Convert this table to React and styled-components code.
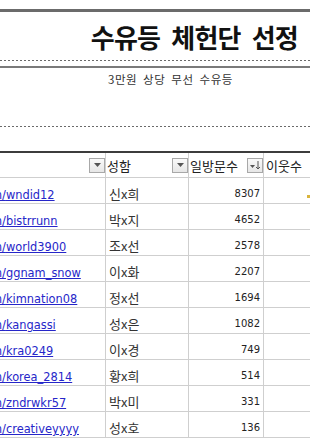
import React from "react"
import styled, { createGlobalStyle } from "styled-components"

//  global
const GlobalStyle = createGlobalStyle`
  body {
    margin: 0;
    background: #fff;
    overflow: hidden;
  }
`

//  styled components
const Sheet = styled.div`
  width: 310px;
  height: 442px;
  overflow: hidden;
  font-family: "Noto Sans CJK KR", "DejaVu Sans", sans-serif;
  color: #222;
`

const Rule = styled.div`
  height: ${(p) => p.$size || 1}px;
  margin-top: ${(p) => p.$top || 0}px;
  background: ${(p) => p.$color || "#777"};
`

const DottedRule = styled.div`
  height: 1px;
  margin-top: ${(p) => p.$top || 0}px;
  background: repeating-linear-gradient(to right, #6a6a6a 0 2px, transparent 2px 4px);
`

const Title = styled.div`
  height: 48px;
  display: flex;
  align-items: center;
  justify-content: flex-end;
  padding-right: 12px;
  font-size: 26px;
  font-weight: 700;
  letter-spacing: -0.8px;
  word-spacing: 6px;
  color: #111;
`

const Subtitle = styled.div`
  height: 58px;
  padding-left: 108px;
  padding-top: 3px;
  box-sizing: border-box;
  font-size: 11.5px;
  letter-spacing: 0.5px;
  word-spacing: 3px;
  color: #333;
`

const Table = styled.div`
  margin-top: 24px;
  border-top: 2px solid #3c3c3c;
`

const Row = styled.div`
  display: grid;
  grid-template-columns: 106px 83px 75px 1fr;
  height: ${(p) => (p.$head ? 24 : 25)}px;
  border-bottom: 1px solid #cfcfcf;
`

const Cell = styled.div`
  display: flex;
  align-items: flex-end;
  justify-content: ${(p) => p.$justify || "flex-start"};
  gap: 3px;
  padding: 0 ${(p) => p.$right || 0}px ${(p) => p.$bottom || 2}px ${(p) => p.$left || 0}px;
  border-right: ${(p) => (p.$last ? "none" : "1px solid #cfcfcf")};
  overflow: hidden;
  white-space: nowrap;
`

const HeadCell = styled(Cell)`
  align-items: center;
  padding-bottom: 0;
  font-size: 13px;
  color: #222;
`

const HeadLabel = styled.span`
  flex: 1;
`

const FilterButton = styled.div`
  width: 14px;
  height: 13px;
  border: 1px solid #a8a8a8;
  background: linear-gradient(#fafafa, #e6e6e6);
  display: flex;
  align-items: center;
  justify-content: center;
  flex-shrink: 0;
`

const Link = styled.a`
  margin-left: -9px;
  font-family: "DejaVu Sans", sans-serif;
  font-size: 11.4px;
  color: #2626c9;
  text-decoration: underline;
`

const Name = styled.span`
  font-size: 13px;
  color: #333;
  line-height: 15px;
`

const Count = styled.span`
  font-family: "DejaVu Sans", sans-serif;
  font-size: 10px;
  color: #222;
  line-height: 12px;
`

const Mark = styled.span`
  margin-left: 43px;
  margin-bottom: 3px;
  width: 3px;
  height: 3px;
  background: #d9b43c;
`

const rows = [
  ["wndid12", "신x희", 8307],
  ["bistrrunn", "박x지", 4652],
  ["world3900", "조x선", 2578],
  ["ggnam_snow", "이x화", 2207],
  ["kimnation08", "정x선", 1694],
  ["kangassi", "성x은", 1082],
  ["kra0249", "이x경", 749],
  ["korea_2814", "황x희", 514],
  ["zndrwkr57", "박x미", 331],
  ["creativeyyyy", "성x호", 136],
]

const Triangle = () => (
  <svg width="7" height="4" viewBox="0 0 7 4">
    <path d="M0 0h7L3.5 4z" fill="#555" />
  </svg>
)

const SortIcon = () => (
  <svg width="11" height="9" viewBox="0 0 11 9">
    <path d="M0 4h5L2.5 7z" fill="#555" />
    <path d="M8 0v8M6 6l2 2 2-2" stroke="#555" strokeWidth="1" fill="none" />
  </svg>
)

const App = () => {
  return (
    <Sheet>
      <GlobalStyle />
      <Rule $top={9} $size={3} $color="#6b6b6b" />
      <Title>수유등 체헌단 선정</Title>
      <DottedRule />
      <Rule $top={5} $size={2} $color="#7a7a7a" />
      <Subtitle>3만원 상당 무선 수유등</Subtitle>
      <DottedRule />
      <Table>
        <Row $head>
          <HeadCell $justify="flex-end">
            <FilterButton>
              <Triangle />
            </FilterButton>
          </HeadCell>
          <HeadCell $left={1}>
            <HeadLabel>성함</HeadLabel>
            <FilterButton>
              <Triangle />
            </FilterButton>
          </HeadCell>
          <HeadCell $left={1}>
            <HeadLabel>일방문수</HeadLabel>
            <FilterButton>
              <SortIcon />
            </FilterButton>
          </HeadCell>
          <HeadCell $left={2} $last>
            이웃수
          </HeadCell>
        </Row>
        {rows.map(([blog, name, count], i) => (
          <Row key={i}>
            <Cell $bottom={1}>
              <Link>m/{blog}</Link>
            </Cell>
            <Cell $left={3}>
              <Name>{name}</Name>
            </Cell>
            <Cell $justify="flex-end" $right={3} $bottom={3}>
              <Count>{count}</Count>
            </Cell>
            <Cell $last>{i === 0 ? <Mark /> : null}</Cell>
          </Row>
        ))}
      </Table>
    </Sheet>
  )
}

export default App
